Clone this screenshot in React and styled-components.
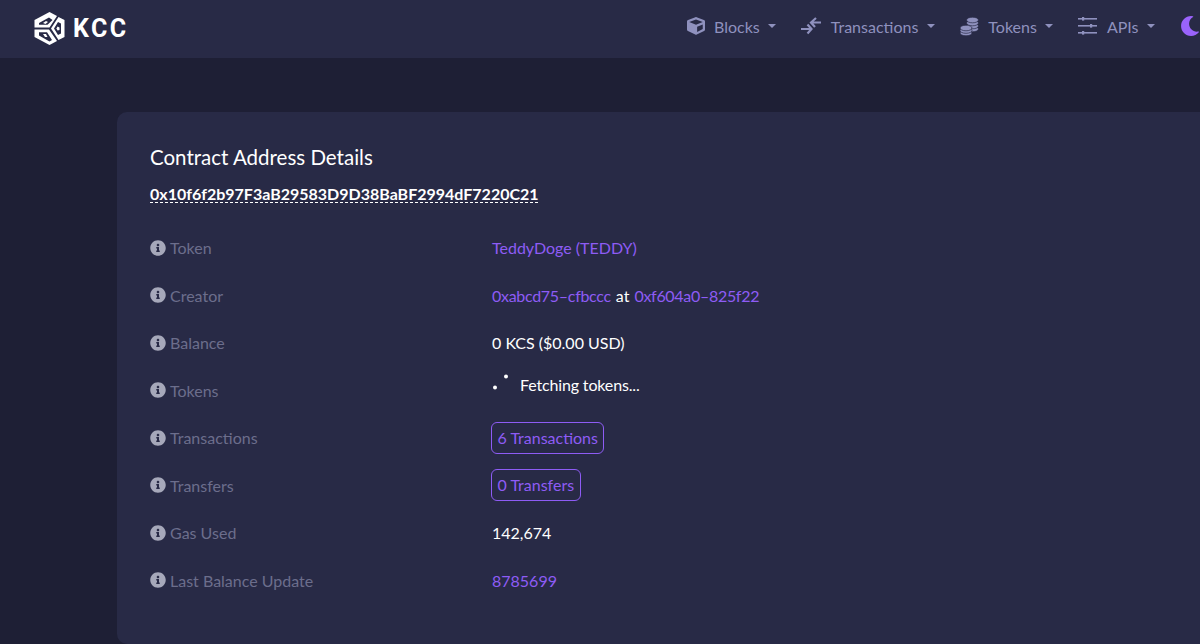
import React from "react";
import styled, { createGlobalStyle } from "styled-components";
import { FaCube, FaInfoCircle, FaMoon } from "react-icons/fa";

const Global = createGlobalStyle`
  html, body {
    margin: 0;
    height: 100%;
    overflow: hidden;
    background: #1e1f35;
  }
  body {
    font-family: "Lato", "Open Sans", sans-serif;
  }
`;

const Page = styled.div`
  width: 1200px;
  height: 644px;
  overflow: hidden;
  background: #1e1f35;
`;

const Header = styled.header`
  width: 1200px;
  height: 58px;
  box-sizing: border-box;
  padding: 0 0 0 33px;
  display: flex;
  align-items: center;
  justify-content: space-between;
  background: #282a46;
`;

const Brand = styled.div`
  display: flex;
  align-items: center;
  gap: 7px;
  margin-bottom: 2px;
  color: #fff;
  font-family: "Roboto", sans-serif;
  font-weight: 700;
  font-size: 25px;
  letter-spacing: 2.5px;
`;

const Nav = styled.nav`
  display: flex;
  align-items: center;
  gap: 25px;
  margin-bottom: 6px;
`;

const NavItem = styled.div`
  display: flex;
  align-items: center;
  gap: 9.5px;
  color: #8f91be;
  font-size: 16px;
  svg {
    flex: none;
  }
`;

const Caret = styled.span`
  width: 0;
  height: 0;
  margin-left: -1px;
  border-left: 4.5px solid transparent;
  border-right: 4.5px solid transparent;
  border-top: 4.5px solid #8f91be;
`;

const Moon = styled(FaMoon)`
  color: #9a63fb;
  width: 20px;
  height: 20px;
`;

const Card = styled.main`
  width: 1200px;
  height: 532px;
  margin: 54px 0 0 117px;
  padding: 32px 33px;
  box-sizing: border-box;
  background: #282a46;
  border-radius: 10px;
`;

const Title = styled.h1`
  margin: 0;
  font-size: 20.5px;
  line-height: 26px;
  font-weight: 400;
  color: #fff;
`;

const Address = styled.a`
  display: inline-block;
  margin-top: 13px;
  color: #fff;
  font-weight: 700;
  font-size: 16px;
  line-height: 22px;
  text-decoration: underline dashed #fff 1px;
  text-underline-offset: 2px;
`;

const Rows = styled.div`
  margin-top: 19px;
  display: grid;
  grid-template-columns: 342px 1fr;
  grid-auto-rows: 47.5px;
  align-items: center;
`;

const Label = styled.div`
  display: flex;
  align-items: center;
  gap: 4px;
  color: #6c6e8c;
  font-size: 16px;
  svg {
    color: #a6a8ba;
    width: 16px;
    height: 16px;
  }
`;

const Value = styled.div`
  color: #fff;
  font-size: 16px;
  display: flex;
  align-items: center;
  gap: 5px;
`;

const Link = styled.a`
  color: #8e5cf5;
  letter-spacing: ${(p) => (p.$tight ? "-0.3px" : "0")};
`;

const Pill = styled.a`
  margin-left: -1px;
  color: #8e5cf5;
  border: 1.5px solid #8e5cf5;
  border-radius: 6px;
  padding: 6px 5.5px;
  line-height: 18px;
`;

const Fetching = styled.div`
  display: flex;
  align-items: center;
  gap: 5px;
  margin-bottom: 12px;
  letter-spacing: -0.15px;
`;

const Spinner = styled.svg`
  margin-right: 3px;
`;

function Logo() {
  return (
    <svg width="33" height="33" viewBox="0 0 33 33" fill="#fff" fillRule="evenodd">
      <path d="M1.500 15.500V8L16.500 0l7.500 4-7.500 11.500zM6 12.800h8.500l5-4.800-3.500-2.500-10 5.500z" />
      <path d="M10 11l3-2 2 1-2.500 2z" />
      <path d="M25.500 5L31.500 8v17l-6 3-7.500-11.500zM25 10l-4 6.500 4 6.500 3-1.500v-10z" />
      <path d="M24.500 14.500l2 1v2.500l-2 .5-1-2z" />
      <path d="M1.500 17.500H16L24 29l-7.500 4-15-8zM6 20.300v3.200l10.500 6 2.500-1.500-5-7.700z" />
      <path d="M10 22h3l1.500 3H12z" />
    </svg>
  );
}

function TxIcon() {
  return (
    <svg width="20" height="18" viewBox="0 0 20 18" fill="none" stroke="currentColor" strokeWidth="2.200">
      <path d="M20 5.500H10.500M15 1L10 5.500l4 4.500" />
      <path d="M0 12h10M6.500 7.500l4 4.500-4 4.500" />
    </svg>
  );
}

function CoinsIcon() {
  return (
    <svg width="19" height="19" viewBox="0 0 19 19" fill="currentColor" stroke="#282a46" strokeWidth="0.700">
      {[12, 9, 6, 3].map((cy) => (
        <ellipse key={cy} cx="12.500" cy={cy} rx="6" ry="2.800" />
      ))}
      {[16, 13.500, 11].map((cy) => (
        <ellipse key={cy} cx="6" cy={cy} rx="6" ry="2.800" />
      ))}
    </svg>
  );
}

function SlidersIcon() {
  return (
    <svg width="19" height="18" viewBox="0 0 19 18" fill="currentColor">
      <rect y="1" width="19" height="1.600" />
      <rect x="4" y="0" width="2.200" height="3.600" />
      <rect y="8" width="19" height="1.600" />
      <rect x="12" y="7" width="2.200" height="3.600" />
      <rect y="15" width="19" height="1.600" />
      <rect x="4" y="14" width="2.200" height="3.600" />
    </svg>
  );
}

function SpinnerDots() {
  return (
    <Spinner width="20" height="20" viewBox="0 0 20 20" fill="#fff">
      <circle cx="3" cy="13.500" r="2" />
      <circle cx="14" cy="2.500" r="2" />
    </Spinner>
  );
}

const navItems = [
  { label: "Blocks", icon: <FaCube size={18} /> },
  { label: "Transactions", icon: <TxIcon /> },
  { label: "Tokens", icon: <CoinsIcon /> },
  { label: "APIs", icon: <SlidersIcon /> },
];

function Row({ label, children }) {
  return (
    <>
      <Label>
        <FaInfoCircle />
        {label}
      </Label>
      <Value>{children}</Value>
    </>
  );
}

export default function App() {
  return (
    <Page>
      <Global />
      <Header>
        <Brand>
          <Logo />
          KCC
        </Brand>
        <Nav>
          {navItems.map((item) => (
            <NavItem key={item.label}>
              {item.icon}
              {item.label}
              <Caret />
            </NavItem>
          ))}
          <Moon />
        </Nav>
      </Header>
      <Card>
        <Title>Contract Address Details</Title>
        <Address>0x10f6f2b97F3aB29583D9D38BaBF2994dF7220C21</Address>
        <Rows>
          <Row label="Token">
            <Link>TeddyDoge (TEDDY)</Link>
          </Row>
          <Row label="Creator">
            <Link $tight>0xabcd75–cfbccc</Link> at <Link $tight>0xf604a0–825f22</Link>
          </Row>
          <Row label="Balance">0 KCS ($0.00 USD)</Row>
          <Row label="Tokens">
            <Fetching>
              <SpinnerDots />
              Fetching tokens...
            </Fetching>
          </Row>
          <Row label="Transactions">
            <Pill>6 Transactions</Pill>
          </Row>
          <Row label="Transfers">
            <Pill>0 Transfers</Pill>
          </Row>
          <Row label="Gas Used">142,674</Row>
          <Row label="Last Balance Update">
            <Link>8785699</Link>
          </Row>
        </Rows>
      </Card>
    </Page>
  );
}
